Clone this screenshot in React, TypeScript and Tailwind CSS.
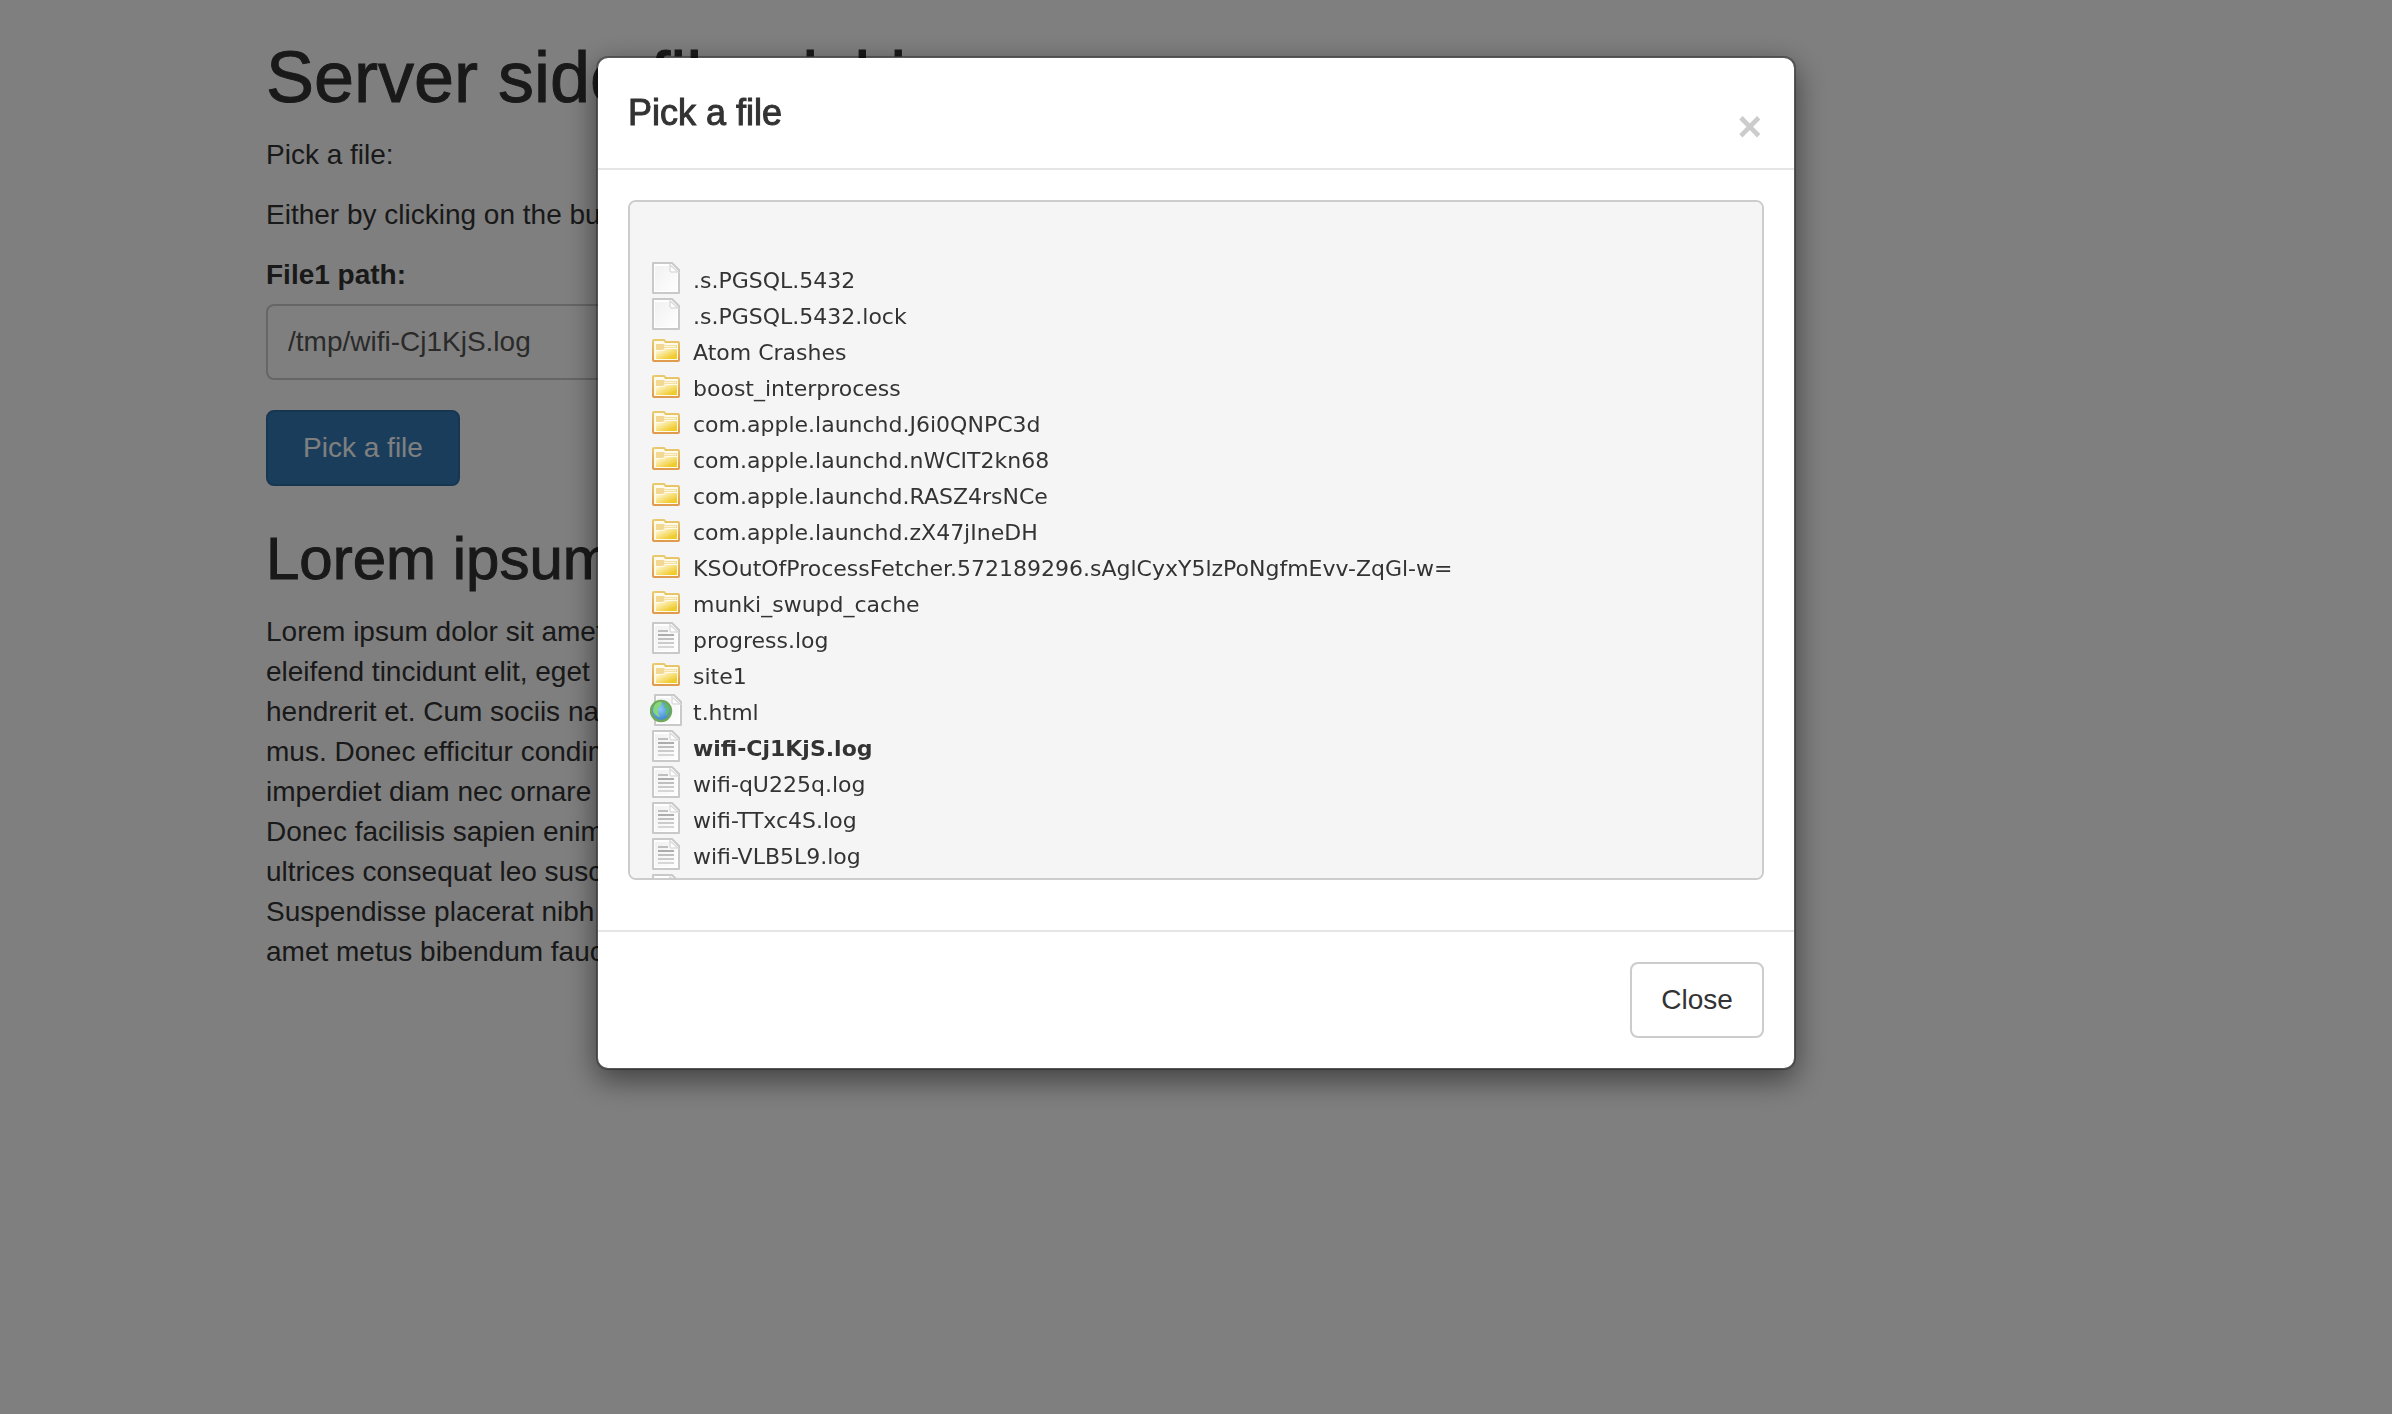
import React from "react";

type Kind = "file" | "text" | "folder" | "html";
type Entry = { name: string; kind: Kind; selected?: boolean };

const entries: Entry[] = [
  { name: ".s.PGSQL.5432", kind: "file" },
  { name: ".s.PGSQL.5432.lock", kind: "file" },
  { name: "Atom Crashes", kind: "folder" },
  { name: "boost_interprocess", kind: "folder" },
  { name: "com.apple.launchd.J6i0QNPC3d", kind: "folder" },
  { name: "com.apple.launchd.nWCIT2kn68", kind: "folder" },
  { name: "com.apple.launchd.RASZ4rsNCe", kind: "folder" },
  { name: "com.apple.launchd.zX47jIneDH", kind: "folder" },
  { name: "KSOutOfProcessFetcher.572189296.sAglCyxY5lzPoNgfmEvv-ZqGl-w=", kind: "folder" },
  { name: "munki_swupd_cache", kind: "folder" },
  { name: "progress.log", kind: "text" },
  { name: "site1", kind: "folder" },
  { name: "t.html", kind: "html" },
  { name: "wifi-Cj1KjS.log", kind: "text", selected: true },
  { name: "wifi-qU225q.log", kind: "text" },
  { name: "wifi-TTxc4S.log", kind: "text" },
  { name: "wifi-VLB5L9.log", kind: "text" },
  { name: "wifi-XGbzmX.log", kind: "text" },
];

const loremLines = [
  "Lorem ipsum dolor sit amet,",
  "eleifend tincidunt elit, eget",
  "hendrerit et. Cum sociis natoque",
  "mus. Donec efficitur condimentum",
  "imperdiet diam nec ornare",
  "Donec facilisis sapien enim,",
  "ultrices consequat leo suscipit",
  "Suspendisse placerat nibh",
  "amet metus bibendum faucibus.",
];

function Gradients() {
  return (
    <svg className="absolute size-0" aria-hidden="true">
      <defs>
        <linearGradient id="paper" x1="0" y1="0" x2="1" y2="1">
          <stop offset="0" stopColor="#f1f1f1" />
          <stop offset="1" stopColor="#fefefe" />
        </linearGradient>
        <linearGradient id="folderEdge" x1="0" y1="0" x2="0" y2="1">
          <stop offset="0" stopColor="#e8c96c" />
          <stop offset="1" stopColor="#e09a4c" />
        </linearGradient>
        <linearGradient id="folderFill" x1="0" y1="0" x2="1" y2="1">
          <stop offset="0.1" stopColor="#fff8d8" />
          <stop offset="0.8" stopColor="#f0cb2c" />
        </linearGradient>
        <radialGradient id="globe" cx="0.45" cy="0.4" r="0.6">
          <stop offset="0" stopColor="#8cc8f6" />
          <stop offset="1" stopColor="#3b83cf" />
        </radialGradient>
      </defs>
    </svg>
  );
}

function Paper({ shift = 0 }: { shift?: number }) {
  return (
    <g transform={`translate(${shift} 0)`}>
      <path d="M3 1h19l7 7v23H3z" fill="#fff" stroke="#c9c9c9" strokeWidth="2" strokeLinejoin="round" />
      <path d="M5 4h14v7h8v18H5z" fill="url(#paper)" />
      <path d="M20 3v6q0 1 1 1h7z" fill="#fff" stroke="#dcdcdc" strokeWidth="1.5" />
    </g>
  );
}

function EntryIcon({ kind }: { kind: Kind }) {
  return (
    <svg viewBox="0 0 32 32" className="size-8 shrink-0" aria-hidden="true">
      {kind === "folder" && (
        <>
          <path d="M3 26V7q0-1 1-1h10q1 0 1.500 2H28q1 0 1 1v17q0 1-1 1H4q-1 0-1-1z" fill="#fffaea" stroke="url(#folderEdge)" strokeWidth="2" />
          <path d="M6 10h7.500l1.500 1H27v3H15l-2 2H6z" fill="#f3d894" />
          <path d="M14 12.500h12" stroke="#fff6d6" strokeWidth="1.500" />
          <path d="M6 17h7l3-2h11v10H6z" fill="url(#folderFill)" />
        </>
      )}
      {(kind === "file" || kind === "text") && <Paper />}
      {kind === "text" && (
        <g strokeWidth="1.800">
          <path d="M8 9h10" stroke="#b9b9b9" />
          <path d="M8 13h16" stroke="#a4a4a4" />
          <path d="M8 17h16" stroke="#b8b8b8" />
          <path d="M8 21h16" stroke="#c6c6c6" />
          <path d="M8 25h16" stroke="#d2d2d2" />
        </g>
      )}
      {kind === "html" && (
        <>
          <Paper shift={2} />
          <circle cx="11" cy="17" r="10" fill="url(#globe)" stroke="#6fa85a" strokeWidth="2.400" />
          <path d="M4 12q3-5 8-4l-1 4-3 2v5l2 4q-5-1-7-6z" fill="#86d67c" />
          <path d="M15 9q4 2 4.500 7l-2.500 6-2-3 2-4-3-2z" fill="#5fbb6c" />
        </>
      )}
    </svg>
  );
}

export default function App() {
  return (
    <div className="min-h-screen bg-white font-['Liberation_Sans',Arial,sans-serif] text-[28px] leading-10 text-[#333]">
      <Gradients />
      <main className="px-[266px] pt-[39px]">
        <div className="max-w-[1400px]">
          <h1 className="text-[72px] leading-[76px] whitespace-nowrap [-webkit-text-stroke:1px_currentColor]">
            Server side file picking
          </h1>
          <p className="mt-5">Pick a file:</p>
          <p className="mt-5">Either by clicking on the button</p>
          <label htmlFor="file1" className="mt-5 block font-bold">
            File1 path:
          </label>
          <input
            id="file1"
            type="text"
            defaultValue="/tmp/wifi-Cj1KjS.log"
            className="mt-[9px] block h-[76px] w-full rounded-lg border-2 border-[#ccc] bg-white px-5 text-[#555]"
          />
          <button
            type="button"
            className="mt-[30px] block h-[76px] min-w-[194px] rounded-lg border-2 border-[#2e6da4] bg-[#337ab7] px-6 text-white"
          >
            Pick a file
          </button>
          <h2 className="mt-10 text-[60px] leading-[66px] [-webkit-text-stroke:1px_currentColor]">Lorem ipsum</h2>
          <p className="mt-5">
            {loremLines.map((line) => (
              <span key={line} className="block whitespace-nowrap">
                {line}
              </span>
            ))}
          </p>
        </div>
      </main>

      <div className="fixed inset-0 overflow-hidden bg-black/50 pt-14">
        <div
          role="dialog"
          aria-modal="true"
          aria-labelledby="picker-title"
          className="mx-auto max-w-[1200px] rounded-xl border-2 border-black/30 bg-white bg-clip-padding shadow-[0_10px_30px_rgba(0,0,0,0.5)]"
        >
          <header className="flex items-start justify-between border-b-2 border-[#e5e5e5] p-[30px]">
            <h4 id="picker-title" className="text-[36px] leading-[50px] [-webkit-text-stroke:1px_currentColor]">
              Pick a file
            </h4>
            <button type="button" aria-label="Dismiss" className="mt-7 mr-0.5 text-[42px] leading-[22px] font-bold text-[#ccc]">
              ×
            </button>
          </header>
          <div className="px-[30px] pt-[30px] pb-[50px]">
            <ul className="h-[680px] overflow-y-auto rounded-lg border-2 border-[#ccc] bg-[#f5f5f5] px-5 pt-[58px] [scrollbar-width:none]">
              {entries.map((entry) => (
                <li key={entry.name}>
                  <a
                    href="#"
                    className={
                      entry.selected
                        ? "flex h-9 items-center gap-[11px] font-['DejaVu_Sans',Verdana,sans-serif] text-[22px] leading-7 font-bold"
                        : "flex h-9 items-center gap-[11px] font-['DejaVu_Sans',Verdana,sans-serif] text-[22px] leading-7"
                    }
                  >
                    <EntryIcon kind={entry.kind} />
                    <span className="pt-1.5">{entry.name}</span>
                  </a>
                </li>
              ))}
            </ul>
          </div>
          <footer className="flex justify-end border-t-2 border-[#e5e5e5] p-[30px]">
            <button type="button" className="h-[76px] min-w-[134px] rounded-lg border-2 border-[#ccc] bg-white px-6">
              Close
            </button>
          </footer>
        </div>
      </div>
    </div>
  );
}
